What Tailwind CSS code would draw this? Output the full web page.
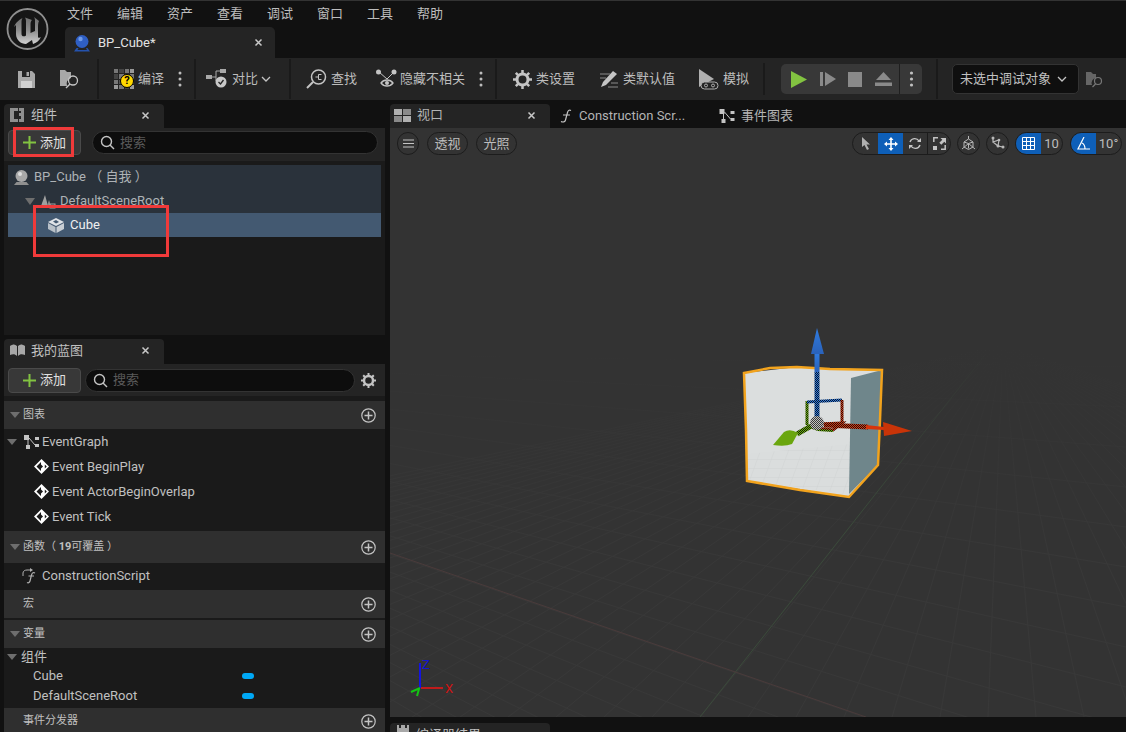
<!DOCTYPE html>
<html lang="zh-CN">
<head>
  <meta charset="UTF-8" />
  <title>BP_Cube</title>
  <script src="https://cdn.jsdelivr.net/npm/@tailwindcss/browser@4"></script>
</head>
<body class="bg-[#111111] text-[#c0c0c0] overflow-hidden font-['Roboto','Noto_Sans_CJK_SC',sans-serif] text-[13px]">
<div class="relative w-[1126px] h-[732px] overflow-hidden flex flex-col">

  <!-- title bar -->
  <div class="h-[58px] shrink-0 bg-[#111111] border-t border-[#333333] flex">
    <div class="w-[65px] shrink-0 flex pl-[6px] pt-[7px]">
      <svg width="44" height="44" viewBox="0 0 44 44">
        <defs><linearGradient id="ue" x1="0" y1="0" x2="0" y2="1"><stop offset="0" stop-color="#6f6f6f"/><stop offset="0.5" stop-color="#8f8f8f"/><stop offset="1" stop-color="#d0d0d0"/></linearGradient></defs>
        <circle cx="21.500" cy="21" r="20" fill="#161616" stroke="#8f8f8f" stroke-width="1.800"/>
        <path d="M8 19C10 14 13 12 16.500 10C15.500 12 15.500 13 15.500 15V26C15.500 28.500 18 29 20 27.500V13C20 11.500 19.500 10.500 19 9.500L26 12C25 13 24.500 14 24.500 16V25L29 23V12C29 11 28.500 10 28 9L33 13C32 15 32 17 32 20V29C32 30 34 30 35 29C33 33 30 35 27 36L26 32L20 36C15 36 10 32 10 26V17Z" fill="url(#ue)"/>
      </svg>
    </div>
    <div class="flex flex-col">
      <div class="h-[26px] flex items-center gap-[24px] pl-[2px] text-[#bdbdbd]">
        <span>文件</span><span>编辑</span><span>资产</span><span>查看</span><span>调试</span><span>窗口</span><span>工具</span><span>帮助</span>
      </div>
      <div class="w-[210px] h-[31px] bg-[#242424] rounded-t-[5px] flex items-center pl-[8px] pr-[12px]">
        <svg width="18" height="18" viewBox="0 0 18 18"><circle cx="9" cy="7.500" r="6.500" fill="#2f5fc4"/><circle cx="7.500" cy="5" r="2.200" fill="#6f9be8"/><path d="M1 17.500h16l-2.500-3.500h-1.500l1 2H4.500l1-2H3.500z" fill="#2452ad"/></svg>
        <span class="ml-[7px] text-[#e2e2e2]">BP_Cube*</span>
        <svg class="ml-auto" width="9" height="9" viewBox="0 0 9 9"><path d="M1.500 1.500l6 6m0-6l-6 6" stroke="#c8c8c8" stroke-width="1.500"/></svg>
      </div>
    </div>
  </div>

  <!-- main toolbar -->
  <div class="h-[42px] shrink-0 bg-[#242424] flex items-center text-[#bdbdbd]">
    <svg class="ml-[17px]" width="19" height="19" viewBox="0 0 19 19"><path d="M1 1h14l3 3v14H1z" fill="#a8a8a8"/><path d="M5 1h8v6H5z" fill="#242424"/><path d="M9.500 2h2.500v4H9.500z" fill="#a8a8a8"/><path d="M4 11h11v7H4z" fill="#d0d0d0"/></svg>
    <svg class="ml-[24px]" width="21" height="20" viewBox="0 0 21 20"><path d="M0 1h5l2 2h4v6a6 6 0 0 0-4 8H0z" fill="#a8a8a8"/><circle cx="13" cy="11.500" r="4.500" fill="none" stroke="#c4c4c4" stroke-width="1.300"/><path d="M10 15l-4 4" stroke="#c4c4c4" stroke-width="1.500"/></svg>
    <div class="ml-[16px] w-[2px] h-[40px] bg-[#1a1a1a]"></div>

    <div class="relative ml-[15px] w-[20px] h-[20px] grid grid-cols-4 gap-[1px]">
      <i class="bg-[#777777]"></i><i class="bg-[#444444]"></i><i class="bg-[#777777]"></i><i class="bg-[#999999]"></i>
      <i class="bg-[#444444]"></i><i class="bg-[#777777]"></i><i class="bg-[#555555]"></i><i class="bg-[#777777]"></i>
      <i class="bg-[#777777]"></i><i class="bg-[#555555]"></i><i class="bg-[#777777]"></i><i class="bg-[#555555]"></i>
      <i class="bg-[#999999]"></i><i class="bg-[#777777]"></i><i class="bg-[#444444]"></i><i class="bg-[#999999]"></i>
      <span class="absolute left-[6px] top-[5px] w-[14px] h-[14px] rounded-full bg-[#ffd800] border border-black text-black text-[11px] leading-[12px] font-bold text-center">?</span>
    </div>
    <span class="ml-[4px]">编译</span>
    <svg class="ml-[14px]" width="4" height="16" viewBox="0 0 4 16"><circle cx="2" cy="2" r="1.500" fill="#bdbdbd"/><circle cx="2" cy="8" r="1.500" fill="#bdbdbd"/><circle cx="2" cy="14" r="1.500" fill="#bdbdbd"/></svg>
    <div class="ml-[12px] w-[2px] h-[40px] bg-[#1a1a1a]"></div>

    <svg class="ml-[10px]" width="24" height="20" viewBox="0 0 24 20"><rect x="0" y="6" width="6" height="4" fill="#a8a8a8"/><rect x="14" y="0" width="6" height="4" fill="#a8a8a8"/><path d="M6 8h4V2h4M10 8v4" stroke="#a8a8a8" fill="none"/><circle cx="15" cy="13" r="5.500" fill="#c8c8c8"/><path d="M12.500 13l2 2 3-4" stroke="#242424" stroke-width="1.300" fill="none"/></svg>
    <span class="ml-[2px]">对比</span>
    <svg class="ml-[3px]" width="10" height="6" viewBox="0 0 10 6"><path d="M1 1l4 4 4-4" stroke="#c4c4c4" stroke-width="1.300" fill="none"/></svg>
    <div class="ml-[18px] w-[2px] h-[40px] bg-[#1a1a1a]"></div>

    <svg class="ml-[15px]" width="21" height="20" viewBox="0 0 21 20"><circle cx="12.500" cy="8" r="7" fill="none" stroke="#c4c4c4" stroke-width="1.500"/><path d="M7 13l-6 6" stroke="#c4c4c4" stroke-width="2"/><path d="M9.500 8h3M12.500 5.500v5M12.500 5.500h3M12.500 10.500h3" stroke="#c4c4c4" fill="none"/></svg>
    <span class="ml-[4px]">查找</span>
    <svg class="ml-[19px]" width="21" height="20" viewBox="0 0 21 20"><circle cx="2.500" cy="3" r="2.500" fill="#c4c4c4"/><circle cx="18" cy="3" r="2.500" fill="#c4c4c4"/><path d="M3 3l8 7 7-7" stroke="#c4c4c4" fill="none"/><path d="M5 14c3-4 9-4 12 0-3 4-9 4-12 0z" fill="#242424" stroke="#c4c4c4" stroke-width="1.300"/><circle cx="11" cy="14" r="2" fill="#c4c4c4"/></svg>
    <span class="ml-[3px]">隐藏不相关</span>
    <svg class="ml-[14px]" width="4" height="16" viewBox="0 0 4 16"><circle cx="2" cy="2" r="1.500" fill="#bdbdbd"/><circle cx="2" cy="8" r="1.500" fill="#bdbdbd"/><circle cx="2" cy="14" r="1.500" fill="#bdbdbd"/></svg>
    <div class="ml-[12px] w-[2px] h-[40px] bg-[#1a1a1a]"></div>

    <svg class="ml-[16px]" width="19" height="19" viewBox="0 0 19 19"><circle cx="9.500" cy="9.500" r="5.500" fill="none" stroke="#c4c4c4" stroke-width="3"/><path d="M9.500 0v4M9.500 15v4M0 9.500h4M15 9.500h4M2.800 2.800l2.800 2.800M13.400 13.400l2.800 2.800M16.200 2.800l-2.800 2.800M5.600 13.400l-2.800 2.800" stroke="#c4c4c4" stroke-width="2.500"/></svg>
    <span class="ml-[4px]">类设置</span>
    <svg class="ml-[24px]" width="20" height="19" viewBox="0 0 20 19"><path d="M14 1l4 3-11 11-5 2 2-5z" fill="#c4c4c4"/><path d="M1 4h10M1 8h6M12 13h7M9 17h10" stroke="#8a8a8a"/></svg>
    <span class="ml-[4px]">类默认值</span>
    <svg class="ml-[24px]" width="20" height="21" viewBox="0 0 20 21"><path d="M0 0l15 10-15 8z" fill="#b0b0b0"/><rect x="2" y="13" width="17" height="7" rx="3.500" fill="#242424" stroke="#b0b0b0"/><circle cx="7" cy="16.500" r="1.500" fill="none" stroke="#b0b0b0"/><circle cx="14" cy="16.500" r="1.500" fill="none" stroke="#b0b0b0"/></svg>
    <span class="ml-[4px]">模拟</span>
    <div class="ml-[14px] w-[2px] h-[32px] bg-[#1a1a1a]"></div>

    <div class="ml-[16px] w-[141px] h-[30px] rounded-[5px] bg-[#383838] flex items-center">
      <svg class="ml-[10px]" width="16" height="17" viewBox="0 0 16 17"><path d="M0 0l16 8.500L0 17z" fill="#82c341"/></svg>
      <svg class="ml-[13px]" width="16" height="14" viewBox="0 0 16 14"><path d="M0 0h3v14H0z" fill="#8a8a8a"/><path d="M5 0l11 7-11 7z" fill="#8a8a8a"/></svg>
      <svg class="ml-[12px]" width="14" height="15" viewBox="0 0 14 15"><path d="M0 0h14v15H0z" fill="#8a8a8a"/></svg>
      <svg class="ml-[13px]" width="17" height="14" viewBox="0 0 17 14"><path d="M8.500 0L16 8H1z" fill="#8a8a8a"/><path d="M0 10.500h17V14H0z" fill="#8a8a8a"/></svg>
      <div class="ml-[7px] w-[1px] h-[30px] bg-[#1f1f1f]"></div>
      <svg class="ml-[9px]" width="5" height="16" viewBox="0 0 5 16"><circle cx="2.500" cy="2" r="1.600" fill="#c0c0c0"/><circle cx="2.500" cy="8" r="1.600" fill="#c0c0c0"/><circle cx="2.500" cy="14" r="1.600" fill="#c0c0c0"/></svg>
    </div>
    <div class="ml-[14px] w-[2px] h-[40px] bg-[#1a1a1a]"></div>
    <div class="ml-[14px] w-[127px] h-[30px] rounded-[5px] bg-[#0f0f0f] border border-[#333333] flex items-center pl-[7px] text-[#c0c0c0]">
      未选中调试对象
      <svg class="ml-[6px]" width="10" height="6" viewBox="0 0 10 6"><path d="M1 1l4 4 4-4" stroke="#c4c4c4" stroke-width="1.300" fill="none"/></svg>
    </div>
    <svg class="ml-[7px]" width="18" height="17" viewBox="0 0 18 17"><path d="M0 1h5l2 2h3v4a5 5 0 0 0-4 7H0z" fill="#666666"/><circle cx="12" cy="10" r="3.500" fill="none" stroke="#777777" stroke-width="1.200"/><path d="M9.500 13l-3 3" stroke="#777777" stroke-width="1.300"/></svg>
  </div>

  <!-- workspace -->
  <div class="flex-1 min-h-0 flex pt-[4px]">

    <!-- left column -->
    <div class="w-[390px] shrink-0 pl-[4px] pr-[5px] flex flex-col">
      <!-- components -->
      <div class="h-[24px] w-[160px] shrink-0 bg-[#242424] rounded-t-[4px] flex items-center pl-[6px] pr-[14px] pb-[2px]">
        <svg width="14" height="14" viewBox="0 0 14 14"><path d="M0 0h8v3H4v8h4v3H0zM9 0h5v14H9v-3h2V8H9V5h2V3H9z" fill="#8f8f8f"/></svg>
        <span class="ml-[7px]">组件</span>
        <svg class="ml-auto" width="9" height="9" viewBox="0 0 9 9"><path d="M1.500 1.500l6 6m0-6l-6 6" stroke="#c8c8c8" stroke-width="1.500"/></svg>
      </div>
      <div class="h-[207px] shrink-0 bg-[#1a1a1a] flex flex-col">
        <div class="h-[33px] shrink-0 bg-[#242424] flex items-start pl-[4px] pr-[7px] pt-[2px]">
          <div class="w-[73px] h-[25px] rounded-[4px] bg-[#383838] border border-[#4a4a4a] flex items-center pl-[14px] text-[#e0e0e0]">
            <svg width="13" height="13" viewBox="0 0 13 13"><path d="M5.500 0h2v5.500H13v2H7.500V13h-2V7.500H0v-2h5.500z" fill="#82c341"/></svg>
            <span class="ml-[4px]">添加</span>
          </div>
          <div class="ml-[11px] mt-[1px] flex-1 h-[23px] rounded-full bg-[#0d0d0d] border border-[#333333] flex items-center pl-[7px] text-[#5a5a5a]">
            <svg width="15" height="15" viewBox="0 0 15 15"><circle cx="6.500" cy="6.500" r="5" fill="none" stroke="#c4c4c4" stroke-width="1.400"/><path d="M10 10l4 4" stroke="#c4c4c4" stroke-width="1.500"/></svg>
            <span class="ml-[5px]">搜索</span>
          </div>
        </div>
        <div class="mt-[4px] mx-[4px] flex flex-col">
          <div class="h-[24px] bg-[#2a323b] flex items-center pl-[4px] text-[#aeb2b6]">
            <svg width="18" height="17" viewBox="0 0 18 17"><circle cx="9.500" cy="7" r="6" fill="#a8a8a8"/><circle cx="8" cy="5" r="2" fill="#dddddd"/><path d="M2 16h15l-2.500-3h-10z" fill="#8f8f8f"/></svg>
            <span class="ml-[4px]">BP_Cube （ 自我 ）</span>
          </div>
          <div class="h-[24px] bg-[#2a323b] flex items-center pl-[17px] text-[#aeb2b6]">
            <svg width="10" height="7" viewBox="0 0 10 7"><path d="M0 0h10L5 7z" fill="#6e6e6e"/></svg>
            <svg class="ml-[5px]" width="16" height="15" viewBox="0 0 16 15"><path d="M1 12l4-11 3 11z" fill="#a0a0a0"/><path d="M7 12l2-6 2 6z" fill="#8a8a8a"/><rect x="10" y="10" width="5" height="4" fill="none" stroke="#a0a0a0"/></svg>
            <span class="ml-[4px]">DefaultSceneRoot</span>
          </div>
          <div class="h-[24px] bg-[#435971] flex items-center pl-[40px] text-[#f0f0f0]">
            <svg width="16" height="15" viewBox="0 0 16 15"><path d="M8 0l8 4-8 4-8-4z" fill="#dfe3e7"/><path d="M5 3.500l3-1.500 3 2-3 1.500z" fill="#435971"/><path d="M0 5l7.500 4v6L0 11z" fill="#b8c0c8"/><path d="M16 5L8.500 9v6l7.500-4z" fill="#c8ced4"/></svg>
            <span class="ml-[6px]">Cube</span>
          </div>
        </div>
      </div>

      <!-- my blueprint -->
      <div class="mt-[4px] h-[25px] w-[160px] shrink-0 bg-[#242424] rounded-t-[4px] flex items-center pl-[6px] pr-[14px] pb-[2px]">
        <svg width="15" height="14" viewBox="0 0 15 14"><path d="M0 11V2c3-2 5-2 7 0v10c-2-2-4-2-7-1zM8 2c2-2 4-2 7 0v9c-3-1-5-1-7 1z" fill="#a8a8a8"/></svg>
        <span class="ml-[6px]">我的蓝图</span>
        <svg class="ml-auto" width="9" height="9" viewBox="0 0 9 9"><path d="M1.500 1.500l6 6m0-6l-6 6" stroke="#c8c8c8" stroke-width="1.500"/></svg>
      </div>
      <div class="flex-1 min-h-0 bg-[#1a1a1a] flex flex-col">
        <div class="h-[32px] shrink-0 bg-[#242424] flex items-center pl-[4px] pr-[9px]">
          <div class="w-[73px] h-[25px] rounded-[4px] bg-[#383838] border border-[#4a4a4a] flex items-center pl-[14px] text-[#e0e0e0]">
            <svg width="13" height="13" viewBox="0 0 13 13"><path d="M5.500 0h2v5.500H13v2H7.500V13h-2V7.500H0v-2h5.500z" fill="#82c341"/></svg>
            <span class="ml-[4px]">添加</span>
          </div>
          <div class="ml-[4px] w-[270px] h-[23px] rounded-full bg-[#0d0d0d] border border-[#333333] flex items-center pl-[7px] text-[#5a5a5a]">
            <svg width="15" height="15" viewBox="0 0 15 15"><circle cx="6.500" cy="6.500" r="5" fill="none" stroke="#c4c4c4" stroke-width="1.400"/><path d="M10 10l4 4" stroke="#c4c4c4" stroke-width="1.500"/></svg>
            <span class="ml-[5px]">搜索</span>
          </div>
          <svg class="ml-auto" width="15" height="15" viewBox="0 0 15 15"><circle cx="7.500" cy="7.500" r="4.500" fill="none" stroke="#c4c4c4" stroke-width="2.500"/><path d="M7.500 0v3M7.500 12v3M0 7.500h3M12 7.500h3M2.200 2.200l2 2M10.800 10.800l2 2M12.800 2.200l-2 2M4.200 10.800l-2 2" stroke="#c4c4c4" stroke-width="2"/></svg>
        </div>

        <div class="mt-[5px] h-[28px] shrink-0 bg-[#2f2f2f] flex items-center pl-[6px] pr-[9px] text-[11px]">
          <svg width="10" height="6" viewBox="0 0 10 6"><path d="M0 0h10L5 6z" fill="#6e6e6e"/></svg>
          <span class="ml-[3px]">图表</span>
          <svg class="ml-auto" width="15" height="15" viewBox="0 0 15 15"><circle cx="7.500" cy="7.500" r="6.700" fill="none" stroke="#c4c4c4" stroke-width="1.200"/><path d="M7.500 3.500v8M3.500 7.500h8" stroke="#c4c4c4" stroke-width="1.500"/></svg>
        </div>
        <div class="h-[25px] shrink-0 flex items-center pl-[3px]">
          <svg width="10" height="6" viewBox="0 0 10 6"><path d="M0 0h10L5 6z" fill="#6e6e6e"/></svg>
          <svg class="ml-[7px]" width="15" height="14" viewBox="0 0 15 14"><rect x="0" y="0" width="5" height="5" fill="#c4c4c4"/><rect x="11" y="2" width="4" height="3" fill="#c4c4c4"/><rect x="2" y="10" width="4" height="4" fill="#c4c4c4"/><rect x="11" y="9" width="4" height="3" fill="#c4c4c4"/><path d="M5 3l6 7M4 5v5" stroke="#c4c4c4"/></svg>
          <span class="ml-[3px]">EventGraph</span>
        </div>
        <div class="h-[25px] shrink-0 flex items-center pl-[30px]">
          <svg width="15" height="15" viewBox="0 0 15 15"><path d="M7.500 0l7.500 7.500-7.500 7.500L0 7.500z" fill="#ffffff"/><path d="M2.500 7.500L7 3v2.500l2 2-2 2V12zM10.800 5.500l2 2-2 2z" fill="#1a1a1a"/></svg>
          <span class="ml-[3px]">Event BeginPlay</span>
        </div>
        <div class="h-[25px] shrink-0 flex items-center pl-[30px]">
          <svg width="15" height="15" viewBox="0 0 15 15"><path d="M7.500 0l7.500 7.500-7.500 7.500L0 7.500z" fill="#ffffff"/><path d="M2.500 7.500L7 3v2.500l2 2-2 2V12zM10.800 5.500l2 2-2 2z" fill="#1a1a1a"/></svg>
          <span class="ml-[3px]">Event ActorBeginOverlap</span>
        </div>
        <div class="h-[25px] shrink-0 flex items-center pl-[30px]">
          <svg width="15" height="15" viewBox="0 0 15 15"><path d="M7.500 0l7.500 7.500-7.500 7.500L0 7.500z" fill="#ffffff"/><path d="M2.500 7.500L7 3v2.500l2 2-2 2V12zM10.800 5.500l2 2-2 2z" fill="#1a1a1a"/></svg>
          <span class="ml-[3px]">Event Tick</span>
        </div>

        <div class="mt-[2px] h-[32px] shrink-0 bg-[#2f2f2f] flex items-center pl-[6px] pr-[9px] text-[11px]">
          <svg width="10" height="6" viewBox="0 0 10 6"><path d="M0 0h10L5 6z" fill="#6e6e6e"/></svg>
          <span class="ml-[3px]">函数（ <b class="font-bold">19</b>可覆盖 ）</span>
          <svg class="ml-auto" width="15" height="15" viewBox="0 0 15 15"><circle cx="7.500" cy="7.500" r="6.700" fill="none" stroke="#c4c4c4" stroke-width="1.200"/><path d="M7.500 3.500v8M3.500 7.500h8" stroke="#c4c4c4" stroke-width="1.500"/></svg>
        </div>
        <div class="h-[27px] shrink-0 flex items-center pl-[18px] pb-[2px]">
          <svg width="16" height="16" viewBox="0 0 16 16"><path d="M1 8V5c0-2 2-3 4-3h4" fill="none" stroke="#b0b0b0"/><path d="M8 0l3 2-3 2z" fill="#b0b0b0"/><path d="M13 5c-2-1-3 0-3.500 2l-1.500 6c-.5 2-2 2-3 1.500M6.500 8H12" fill="none" stroke="#b0b0b0" stroke-width="1.200"/></svg>
          <span class="ml-[4px]">ConstructionScript</span>
        </div>
        <div class="h-[28px] shrink-0 bg-[#2f2f2f] flex items-center pl-[19px] pr-[9px] text-[11px]">
          <span>宏</span>
          <svg class="ml-auto" width="15" height="15" viewBox="0 0 15 15"><circle cx="7.500" cy="7.500" r="6.700" fill="none" stroke="#c4c4c4" stroke-width="1.200"/><path d="M7.500 3.500v8M3.500 7.500h8" stroke="#c4c4c4" stroke-width="1.500"/></svg>
        </div>
        <div class="mt-[2px] h-[28px] shrink-0 bg-[#2f2f2f] flex items-center pl-[6px] pr-[9px] text-[11px]">
          <svg width="10" height="6" viewBox="0 0 10 6"><path d="M0 0h10L5 6z" fill="#6e6e6e"/></svg>
          <span class="ml-[3px]">变量</span>
          <svg class="ml-auto" width="15" height="15" viewBox="0 0 15 15"><circle cx="7.500" cy="7.500" r="6.700" fill="none" stroke="#c4c4c4" stroke-width="1.200"/><path d="M7.500 3.500v8M3.500 7.500h8" stroke="#c4c4c4" stroke-width="1.500"/></svg>
        </div>
        <div class="h-[18px] shrink-0 flex items-center pl-[3px]">
          <svg width="10" height="6" viewBox="0 0 10 6"><path d="M0 0h10L5 6z" fill="#6e6e6e"/></svg>
          <span class="ml-[4px]">组件</span>
        </div>
        <div class="h-[20px] shrink-0 flex items-center pl-[29px]">
          <span class="w-[209px]">Cube</span><i class="w-[12px] h-[6px] rounded-full bg-[#00a8f5]"></i>
        </div>
        <div class="h-[20px] shrink-0 flex items-center pl-[29px]">
          <span class="w-[209px]">DefaultSceneRoot</span><i class="w-[12px] h-[6px] rounded-full bg-[#00a8f5]"></i>
        </div>
        <div class="mt-[2px] h-[26px] shrink-0 bg-[#2f2f2f] flex items-center pl-[19px] pr-[9px] text-[11px]">
          <span>事件分发器</span>
          <svg class="ml-auto" width="15" height="15" viewBox="0 0 15 15"><circle cx="7.500" cy="7.500" r="6.700" fill="none" stroke="#c4c4c4" stroke-width="1.200"/><path d="M7.500 3.500v8M3.500 7.500h8" stroke="#c4c4c4" stroke-width="1.500"/></svg>
        </div>
      </div>
    </div>

    <!-- right column -->
    <div class="flex-1 min-w-0 flex flex-col">
      <div class="h-[24px] shrink-0 flex items-center text-[#b4b4b4]">
        <div class="w-[160px] h-[24px] bg-[#242424] rounded-t-[4px] flex items-center pl-[4px] pr-[14px] pb-[2px]">
          <svg width="17" height="13" viewBox="0 0 17 13"><rect width="8" height="6" fill="#b0b0b0"/><rect x="9" width="8" height="6" fill="#8a8a8a"/><rect y="7" width="8" height="6" fill="#8a8a8a"/><rect x="9" y="7" width="8" height="6" fill="#b0b0b0"/></svg>
          <span class="ml-[6px]">视口</span>
          <svg class="ml-auto" width="9" height="9" viewBox="0 0 9 9"><path d="M1.500 1.500l6 6m0-6l-6 6" stroke="#c8c8c8" stroke-width="1.500"/></svg>
        </div>
        <svg class="ml-[10px]" width="12" height="14" viewBox="0 0 12 14"><path d="M11 1.500C9 .5 8 1.500 7.500 3.500L5.500 11C5 13 3 13.500 1 12.500M3 6h7" fill="none" stroke="#c4c4c4" stroke-width="1.200"/></svg>
        <span class="ml-[7px] w-[110px] truncate">Construction Scr...</span>
        <svg class="ml-[30px]" width="16" height="14" viewBox="0 0 15 14"><rect x="0" y="0" width="5" height="5" fill="#c4c4c4"/><rect x="11" y="2" width="4" height="3" fill="#c4c4c4"/><rect x="2" y="10" width="4" height="4" fill="#c4c4c4"/><rect x="11" y="9" width="4" height="3" fill="#c4c4c4"/><path d="M5 3l6 7M4 5v5" stroke="#c4c4c4"/></svg>
        <span class="ml-[6px]">事件图表</span>
      </div>

      <div class="relative h-[589px] shrink-0 bg-[#333333] overflow-hidden">
        <!-- 3D scene: coordinates are relative to the viewport -->
        <svg class="absolute left-0 top-0" width="736" height="589" viewBox="390 128 736 589">
          <defs>
            <pattern id="ckb" width="2" height="2" patternUnits="userSpaceOnUse"><rect width="2" height="2" fill="#2f78dc"/><rect width="1" height="1" fill="#0a1626"/><rect x="1" y="1" width="1" height="1" fill="#0a1626"/></pattern>
            <pattern id="ckr" width="2" height="2" patternUnits="userSpaceOnUse"><rect width="2" height="2" fill="#d03c18"/><rect width="1" height="1" fill="#260c06"/><rect x="1" y="1" width="1" height="1" fill="#260c06"/></pattern>
            <pattern id="ckg" width="2" height="2" patternUnits="userSpaceOnUse"><rect width="2" height="2" fill="#6cb010"/><rect width="1" height="1" fill="#141f06"/><rect x="1" y="1" width="1" height="1" fill="#141f06"/></pattern>
            <pattern id="ckw" width="2" height="2" patternUnits="userSpaceOnUse"><rect width="2" height="2" fill="#c0c0c0"/><rect width="1" height="1" fill="#3a3a3a"/><rect x="1" y="1" width="1" height="1" fill="#3a3a3a"/></pattern>
            <pattern id="flr" width="14" height="9" patternUnits="userSpaceOnUse" patternTransform="skewX(-20)"><rect width="14" height="9" fill="#dadddd"/><path d="M0 0h14M0 0v9" stroke="#d0d3d3" stroke-width="1"/></pattern>
            <linearGradient id="bz" x1="0" y1="0" x2="0" y2="1"><stop offset="0" stop-color="#2f7be0"/><stop offset="1" stop-color="#2a62ba"/></linearGradient>
            <linearGradient id="fade" gradientUnits="userSpaceOnUse" x1="0" y1="345" x2="0" y2="560"><stop offset="0" stop-color="#383838" stop-opacity="0"/><stop offset="1" stop-color="#383838"/></linearGradient>
            <linearGradient id="fadeg" gradientUnits="userSpaceOnUse" x1="0" y1="345" x2="0" y2="520"><stop offset="0" stop-color="#3a4a3a" stop-opacity="0"/><stop offset="1" stop-color="#3a4a3a"/></linearGradient>
          </defs>
          <g id="grid" fill="none" stroke-width="1"></g>
          <path d="M700 717L985 355" stroke="url(#fadeg)" fill="none"/>
          <path d="M390 553L866 717" stroke="#4a3b3b"/>

          <!-- cube -->
          <path d="M744 373L797 367L882 370L878 465L849 497L747 481z" fill="#dbdede"/>
          <path d="M746 454L851 444L849 495L748 480z" fill="url(#flr)"/>
          <path d="M851 378L882 370L878 465L849 494z" fill="#6f868b"/>
          <path d="M744 373L770 368L797 367L830 369L882 370L880 420L878 465L849 497L800 490L747 481L746 430z" fill="none" stroke="#f2a31d" stroke-width="2.500"/>

          <!-- move gizmo -->
          <path d="M807 401L807 425" fill="none" stroke="url(#ckg)" stroke-width="3"/>
          <path d="M807 402L842 400" stroke="url(#ckb)" stroke-width="3"/>
          <path d="M842 400L842 423" stroke="url(#ckr)" stroke-width="3"/>
          <path d="M820 424L842 423L833 430L817 428" fill="none" stroke="url(#ckr)" stroke-width="3"/>
          <path d="M807 426L818 430L833 431" fill="none" stroke="url(#ckg)" stroke-width="2"/>
          <path d="M817 372V420" stroke="url(#ckb)" stroke-width="5"/>
          <path d="M814 353h5v19h-5z" fill="url(#bz)" transform="translate(.500 0)"/>
          <path d="M817 328L824 354H811z" fill="url(#bz)"/>
          <path d="M824 425L868 427" stroke="url(#ckr)" stroke-width="5"/>
          <path d="M866 425L884 427v3L866 429z" fill="#d8340a"/>
          <path d="M883 422L912 431L884 436z" fill="#c93408"/>
          <path d="M813 425L797 434" stroke="url(#ckg)" stroke-width="5"/>
          <path d="M773 445L784 432Q790 428 798 433L792 444Q785 447 773 445z" fill="#6aa60e"/>
          <circle cx="817" cy="423" r="7" fill="url(#ckw)"/>
        </svg>

        <!-- axis widget -->
        <svg class="absolute left-[20px] top-[528px]" width="50" height="46" viewBox="410 656 50 46">
          <path d="M420 663v25" stroke="#1414e0" stroke-width="2"/>
          <path d="M421 688h22" stroke="#f01414" stroke-width="1.500"/>
          <path d="M420 688l-9 4M419 689l-2 7" stroke="#14c414" stroke-width="2"/>
          <text x="422" y="669" fill="#1414d0" font-size="13" font-family="Roboto">Z</text>
          <text x="445" y="693" fill="#d01414" font-size="13" font-family="Roboto">X</text>
        </svg>

        <!-- viewport toolbar -->
        <div class="absolute left-0 right-0 top-[4px] h-[23px] flex items-center text-[#bdbdbd]">
          <div class="ml-[7px] w-[22px] h-[23px] rounded-full border border-[#1c1c1c] flex items-center justify-center">
            <svg width="11" height="9" viewBox="0 0 11 9"><path d="M0 1h11M0 4.500h11M0 8h11" stroke="#c4c4c4"/></svg>
          </div>
          <div class="ml-[8px] w-[41px] h-[23px] rounded-full border border-[#1c1c1c] flex items-center justify-center">透视</div>
          <div class="ml-[8px] w-[41px] h-[23px] rounded-full border border-[#1c1c1c] flex items-center justify-center">光照</div>

          <div class="ml-[335px] w-[99px] h-[23px] rounded-full border border-[#1c1c1c] flex overflow-hidden">
            <div class="w-[25px] flex items-center justify-center"><svg width="10" height="13" viewBox="0 0 10 13"><path d="M1 0l8 7.500H5.500L8 12l-2 1-2.500-5L1 10z" fill="#b0b0b0"/></svg></div>
            <div class="w-[25px] bg-[#0e5fb8] flex items-center justify-center"><svg width="14" height="14" viewBox="0 0 14 14"><path d="M7 0l2.500 3h-1.700v3.200H11V4.500L14 7l-3 2.500V7.800H7.800V11h1.700L7 14l-2.500-3h1.700V7.800H3v1.700L0 7l3-2.500v1.700h3.200V3H4.500z" fill="#ffffff"/></svg></div>
            <div class="w-[25px] border-r border-[#1c1c1c] flex items-center justify-center"><svg width="14" height="13" viewBox="0 0 14 13"><path d="M2 5a5 5 0 0 1 9-1M12 8a5 5 0 0 1-9 1" fill="none" stroke="#c4c4c4" stroke-width="1.400"/><path d="M9 5l4 0 0-4zM5 8l-4 0 0 4z" fill="#c4c4c4"/></svg></div>
            <div class="flex-1 flex items-center justify-center"><svg width="13" height="13" viewBox="0 0 13 13"><path d="M.800 5V.800H5M12.200 8v4.200H8" fill="none" stroke="#c4c4c4" stroke-width="1.500"/><path d="M7.500 1H13v5.500l-1.700-1.700-3 3-2-2 3-3zM0 9h4v4H0z" fill="#c4c4c4"/></svg></div>
          </div>
          <div class="ml-[6px] w-[23px] h-[23px] rounded-full border border-[#1c1c1c] flex items-center justify-center"><svg width="15" height="15" viewBox="0 0 15 15"><path d="M7.500 0v3M7.500 7.500L1 13M7.500 7.500L14 13M7.500 7.500v5M7.500 3L3 6v5l4.500 2.500L12 11V6zM3 6l4.500 1.500L12 6" fill="none" stroke="#b8b8b8"/></svg></div>
          <div class="ml-[6px] w-[23px] h-[23px] rounded-full border border-[#1c1c1c] flex items-center justify-center"><svg width="15" height="15" viewBox="0 0 15 15"><path d="M3 2v4l6-2-1 6 5 1M3 6l5 4" fill="none" stroke="#b8b8b8" stroke-width="1.200"/><circle cx="3" cy="2" r="1.500" fill="#b8b8b8"/><circle cx="9" cy="4" r="1.300" fill="#b8b8b8"/><circle cx="13" cy="11" r="1.500" fill="#b8b8b8"/><circle cx="8" cy="10" r="1.500" fill="#b8b8b8"/></svg></div>
          <div class="ml-[6px] w-[48px] h-[23px] rounded-full border border-[#1c1c1c] flex overflow-hidden">
            <div class="w-[25px] bg-[#0e5fb8] flex items-center justify-center"><svg width="13" height="13" viewBox="0 0 13 13"><path d="M.500.500h12v12H.500zM4.500.500v12M8.500.500v12M.500 4.500h12M.500 8.500h12" fill="none" stroke="#ffffff"/></svg></div>
            <div class="flex-1 flex items-center justify-center">10</div>
          </div>
          <div class="ml-[7px] w-[52px] h-[23px] rounded-full border border-[#1c1c1c] flex overflow-hidden">
            <div class="w-[25px] bg-[#0e5fb8] flex items-center justify-center"><svg width="13" height="13" viewBox="0 0 13 13"><path d="M7 0L1 12h12M5 6c2 1 3 3 3 6" fill="none" stroke="#ffffff" stroke-width="1.200"/></svg></div>
            <div class="flex-1 flex items-center justify-center">10°</div>
          </div>
        </div>
      </div>

      <!-- compiler results tab, cut off by the window -->
      <div class="mt-[6px] h-[24px] w-[160px] shrink-0 bg-[#242424] rounded-t-[4px] flex items-start pl-[7px] pr-[14px] pt-[2px]">
        <svg width="12" height="14" viewBox="0 0 12 14"><path d="M0 0h2v3h2V0h4v3h2V0h2v14H0z" fill="#a8a8a8"/></svg>
        <span class="ml-[7px]">编译器结果</span>
      </div>
    </div>
  </div>

  <!-- red annotation boxes -->
  <div class="absolute left-[13px] top-[127px] w-[61px] h-[30px] border-[3px] border-[#f03a3a]"></div>
  <div class="absolute left-[33px] top-[205px] w-[136px] h-[52px] border-[3px] border-[#f03a3a]"></div>
</div>

<script>
  // floor grid: two families of lines running to their vanishing points
  const grid = document.getElementById('grid');
  function addLine(x1, y1, x2, y2) {
    const line = document.createElementNS('http://www.w3.org/2000/svg', 'line');
    line.setAttribute('x1', x1);
    line.setAttribute('y1', y1);
    line.setAttribute('x2', x2);
    line.setAttribute('y2', y2);
    line.setAttribute('stroke', 'url(#fade)');
    grid.appendChild(line);
  }
  for (let k = -30; k <= 30; k++) {
    addLine(1003, 345, 700 + k * 48, 717);
  }
  for (let k = -12; k <= 12; k++) {
    const y = 807 + k * 40;
    addLine(-218, 345, 1126, y);
  }
</script>
</body>
</html>
